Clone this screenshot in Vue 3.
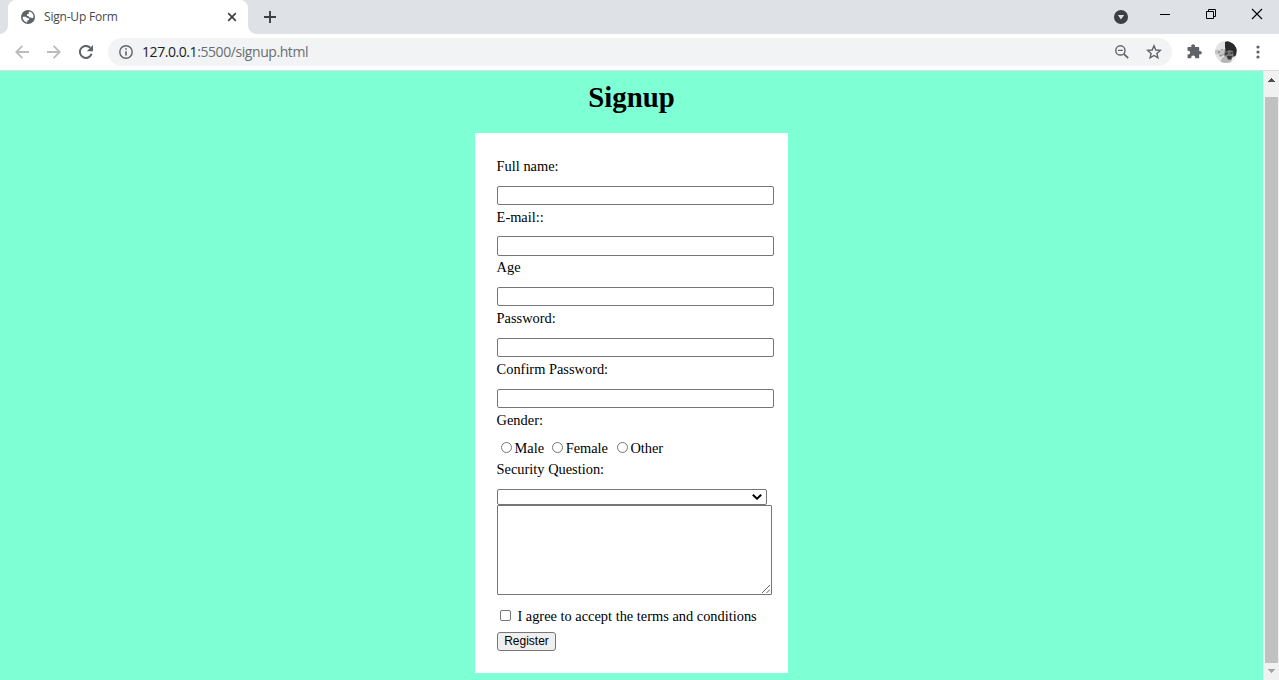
<script setup>
const fields = [
  { id: 'name', label: 'Full name:', type: 'text' },
  { id: 'email', label: 'E-mail::', type: 'email' },
  { id: 'age', label: 'Age', type: 'text' },
  { id: 'password', label: 'Password:', type: 'password' },
  { id: 'confirm', label: 'Confirm Password:', type: 'password' },
]
const genders = ['Male', 'Female', 'Other']
</script>

<template>
  <div class="browser">
    <header class="tabstrip">
      <div class="tab">
        <svg class="globe" width="14" height="14" viewBox="0 0 14 14">
          <circle cx="7" cy="7" r="7" fill="#5f6368" />
          <path d="M8 1.5C10.8 1.8 12.6 4.2 12.5 7.2L11.2 8.3 9.9 7.4H8.3L7.6 6.2 5.9 5.8 6 4.3 7.7 3.7Z" fill="#fff" />
          <path d="M1.6 6.8H4.7L6.2 8 8.2 8.5 8 10.1 6.4 10.6 6.1 12.4C3.5 12 1.5 9.8 1.6 6.8Z" fill="#fff" />
        </svg>
        <span class="tab-title">Sign-Up Form</span>
        <svg class="tab-close" width="10" height="10" viewBox="0 0 10 10"><path d="M1.2 1.2 8.8 8.8M8.8 1.2 1.2 8.8" stroke="#3c4043" stroke-width="1.7" /></svg>
      </div>
      <svg class="newtab" width="12" height="12" viewBox="0 0 12 12"><path d="M0 6H12M6 0V12" stroke="#3c4043" stroke-width="1.9" /></svg>
      <div class="window-controls">
        <svg class="search-tabs" width="14" height="14" viewBox="0 0 14 14"><circle cx="7" cy="7" r="7" fill="#3c4043" /><path d="M3.9 5H10.1L7 9.5Z" fill="#dee1e6" /></svg>
        <svg class="minimize" width="10" height="10" viewBox="0 0 10 10"><path d="M0 5.5H10" stroke="#000" /></svg>
        <svg class="restore" width="10" height="10" viewBox="0 0 10 10"><path d="M.5 2.5H7.5V9.5H.5ZM2.5 2.5V.5H9.5V7.5H7.5" fill="none" stroke="#000" /></svg>
        <svg class="close" width="10" height="10" viewBox="0 0 10 10"><path d="M0 0 10 10M10 0 0 10" stroke="#000" stroke-width="1.1" /></svg>
      </div>
    </header>

    <nav class="toolbar">
      <svg class="back" width="14" height="14" viewBox="0 0 14 14"><path d="M14 7H1.5M7.4.9 1.3 7 7.4 13.1" fill="none" stroke="#babcbe" stroke-width="1.8" /></svg>
      <svg class="forward" width="14" height="14" viewBox="0 0 14 14"><path d="M0 7H12.5M6.6.9 12.7 7 6.6 13.1" fill="none" stroke="#babcbe" stroke-width="1.8" /></svg>
      <svg class="reload" width="14" height="14" viewBox="0 0 14 14"><path d="M12.6 8.8A6 6 0 1 1 11.3 2.8" fill="none" stroke="#5f6368" stroke-width="2" /><path d="M14 0V6.2H7.8Z" fill="#5f6368" /></svg>
      <div class="omnibox">
        <svg class="info" width="14" height="14" viewBox="0 0 14 14"><circle cx="7" cy="7" r="6.2" fill="none" stroke="#5f6368" stroke-width="1.4" /><path d="M7 3.3V4.8M7 6.2V10.6" stroke="#5f6368" stroke-width="1.6" /></svg>
        <span class="url"><b>127.0.0.1</b>:5500/signup.html</span>
        <svg class="zoom-out" width="14" height="14" viewBox="0 0 14 14"><circle cx="5.4" cy="5.4" r="4.6" fill="none" stroke="#5f6368" stroke-width="1.4" /><path d="M3 5.4H7.8" stroke="#5f6368" stroke-width="1.2" /><path d="M8.8 8.8 13.2 13.2" stroke="#5f6368" stroke-width="1.7" /></svg>
        <svg class="star" width="16" height="16" viewBox="0 0 16 16"><path d="M8 1.8 9.8 6 14.3 6.4 10.9 9.4 11.9 13.8 8 11.5 4.1 13.8 5.1 9.4 1.7 6.4 6.2 6Z" fill="none" stroke="#5f6368" stroke-width="1.4" /></svg>
      </div>
      <svg class="extensions" width="15" height="15" viewBox="0 0 15 15"><path d="M1.2 3H4.3C3.9 1.2 4.8.2 6.1.2S8.4 1.2 8 3H11.5Q12.2 3 12.2 3.7V7C13.8 6.6 14.8 7.5 14.8 8.7S13.8 10.7 12.2 10.3V13.6Q12.2 14.3 11.5 14.3H8.2C8.5 12.6 7.5 11.6 6.2 11.6S4 12.6 4.3 14.3H1.2Q.5 14.3.5 13.6V10.5C2.2 10.8 3.1 9.9 3.1 8.6S2.2 6.5.5 6.8V3.7Q.5 3 1.2 3Z" fill="#5f6368" /></svg>
      <svg class="avatar" width="22" height="22" viewBox="0 0 22 22">
        <defs><clipPath id="avatar-clip"><circle cx="11" cy="11" r="11" /></clipPath></defs>
        <g clip-path="url(#avatar-clip)">
          <path d="M0 0H22V22H0Z" fill="#e2e2e2" />
          <path d="M0 9 6 9 10 8V13L6 14 0 13Z" fill="#c4c4c4" />
          <path d="M3 10H5V12H3ZM6 8H8V9H6ZM4 14 9 13V14L5 16Z" fill="#999" />
          <path d="M10 8 13 7 20 9 19 15 16 20 11 19 9 14Z" fill="#777" />
          <path d="M10 1 13 0 19 3 22 8 21 14 19 17 18 10 14 9 11 11 10 6Z" fill="#292929" />
          <path d="M10 12 13 11V13L10 14ZM14 12 18 11 17 13ZM12 15 17 15 16 18 13 18Z" fill="#353535" />
          <path d="M7 17 11 15 13 19 17 19 16 22H5Z" fill="#b5b5b5" />
          <path d="M17 17 22 14V22H16Z" fill="#eee" />
        </g>
      </svg>
      <svg class="menu" width="4" height="14" viewBox="0 0 4 14"><g fill="#5f6368"><circle cx="2" cy="2" r="1.6" /><circle cx="2" cy="7" r="1.6" /><circle cx="2" cy="12" r="1.6" /></g></svg>
    </nav>

    <div class="viewport">
      <main class="page">
        <h1>Signup</h1>
        <form class="card" @submit.prevent>
          <div v-for="f in fields" :key="f.id" class="field">
            <label :for="f.id">{{ f.label }}</label>
            <input :id="f.id" class="text-input" :type="f.type" />
          </div>
          <div class="label">Gender:</div>
          <div class="genders">
            <label v-for="g in genders" :key="g" :class="g.toLowerCase()"><input type="radio" name="gender" /><span>{{ g }}</span></label>
          </div>
          <label class="label question" for="question">Security Question:</label>
          <div class="select">
            <select id="question"></select>
            <svg width="10" height="6" viewBox="0 0 10 6"><path d="M.8.8 5 4.7 9.2.8" fill="none" stroke="#000" stroke-width="2" /></svg>
          </div>
          <div class="answer">
            <textarea></textarea>
            <svg width="8" height="8" viewBox="0 0 8 8"><path d="M0 8 8 0M4.5 8 8 4.5" stroke="#555" stroke-width=".9" /></svg>
          </div>
          <label class="agree"><input type="checkbox" /><span>I agree to accept the terms and conditions</span></label>
          <button type="submit">Register</button>
        </form>
      </main>
      <aside class="scrollbar">
        <svg width="7" height="4" viewBox="0 0 7 4" shape-rendering="crispEdges"><path d="M3 0H4V1H5V2H6V3H7V4H0V3H1V2H2V1H3Z" fill="#505050" /></svg>
        <div class="thumb"></div>
        <svg width="7" height="4" viewBox="0 0 7 4" shape-rendering="crispEdges"><path d="M0 0H7V1H6V2H5V3H4V4H3V3H2V2H1V1H0Z" fill="#a3a3a3" /></svg>
      </aside>
    </div>
  </div>
</template>

<style>
body { overflow: hidden; }
</style>

<style scoped>
.browser { width: 1279px; height: 680px; display: flex; flex-direction: column; background: #fff; overflow: hidden; }
.browser *, .browser *::before, .browser *::after { box-sizing: border-box; }
svg { display: block; flex: none; }
.tabstrip { height: 34px; flex: none; background: #dee1e6; display: flex; align-items: flex-start; padding-left: 8px; }
.tab { position: relative; width: 240px; height: 34px; background: #fff; border-radius: 8px 8px 0 0; display: flex; align-items: center; padding: 0 11px 0 13px; }
.tab::before, .tab::after { content: ''; position: absolute; bottom: 0; width: 8px; height: 8px; }
.tab::before { left: -8px; background: radial-gradient(circle at 0 0, transparent 7.5px, #fff 8px); }
.tab::after { right: -8px; background: radial-gradient(circle at 100% 0, transparent 7.5px, #fff 8px); }
.tab-title { margin-left: 9px; font: 12px/16px 'Open Sans', 'Noto Sans', sans-serif; color: #45494d; letter-spacing: -.2px; white-space: nowrap; }
.tab-close { margin-left: auto; }
.newtab { margin: 11px 0 0 16px; }
.window-controls { margin-left: auto; display: flex; }
.search-tabs { margin: 10px 32px 0 0; }
.minimize { margin: 9px 36px 0 0; }
.restore { margin: 9px 36px 0 0; }
.close { margin: 9px 17px 0 0; overflow: visible; }

.toolbar { height: 37px; flex: none; border-bottom: 1px solid #dadce0; display: flex; align-items: center; padding-left: 15px; }
.forward { margin-left: 18px; }
.reload { margin-left: 18px; }
.omnibox { width: 1064px; height: 28px; margin-left: 15px; border-radius: 14px; background: #f1f3f4; display: flex; align-items: center; padding: 0 10px 0 11px; }
.url { margin-left: 9px; font: 14px/20px 'Open Sans', 'Noto Sans', sans-serif; color: #6a6e72; white-space: nowrap; letter-spacing: -.43px; }
.url b { font-weight: 400; color: #202124; }
.zoom-out { margin-left: auto; }
.star { margin-left: 17px; }
.extensions { margin: 0 0 1px 14.6px; }
.avatar { margin-left: 13.4px; }
.menu { margin-left: 19px; }

.viewport { flex: 1; display: flex; min-height: 0; }
.page { flex: 1; background: #7fffd4; font: 14.4px/16px 'Liberation Serif', 'Times New Roman', serif; color: #000; }
h1 { margin: 10px 0 19px; font-size: 28.8px; line-height: 33px; text-align: center; }
.card { width: 313px; height: 540px; margin: 0 auto; background: #fff; padding: 24.8px 14px 0 21.6px; display: flex; flex-direction: column; align-items: flex-start; }
.field { height: 50.8px; flex: none; }
.field label, .label { display: block; height: 16px; flex: none; }
input, textarea, select { appearance: none; margin: 0; padding: 0; outline: 0; background: #fff; border: 1px solid #767676; }
.text-input { display: block; width: 277px; height: 19.2px; margin: 11.8px 0 0 .4px; border-radius: 2px; }
.genders { height: 16px; flex: none; margin: 11.8px 0 0 4.4px; display: flex; align-items: center; }
.genders label { display: flex; align-items: center; }
.genders input { width: 11px; height: 11px; border-radius: 50%; margin: -1px 2.6px 0 0; }
.female { margin-left: 7.9px; }
.other { margin-left: 8.8px; }
.question { margin-top: 5px; }
.select { position: relative; width: 270px; height: 16px; flex: none; margin: 12.4px 0 0 .4px; }
.select select { display: block; width: 100%; height: 100%; border-radius: 2px; }
.select svg { position: absolute; right: 5px; top: 5px; }
.answer { position: relative; width: 275px; height: 90px; flex: none; margin-left: .4px; }
.answer textarea { display: block; width: 100%; height: 100%; resize: none; border-radius: 1px; }
.answer svg { position: absolute; right: 2px; bottom: 2px; }
.agree { height: 16px; flex: none; margin: 13px 0 0 3.4px; display: flex; align-items: center; white-space: nowrap; }
.agree input { width: 11px; height: 11px; border-radius: 2px; margin: -1px 6.4px 0 0; }
button { width: 59px; height: 19px; flex: none; margin: 8px 0 0 .4px; padding: 0 0 1px; background: #efefef; border: 1px solid #767676; border-radius: 3px; font: 12px/14px 'Liberation Sans', Arial, sans-serif; color: #000; text-align: center; }
.scrollbar { width: 16px; flex: none; background: #f1f1f1; display: flex; flex-direction: column; align-items: center; padding: 7px 0 6px; }
.thumb { width: 13px; height: 566px; margin: 15px 0 6px; background: #c1c1c1; }
</style>
